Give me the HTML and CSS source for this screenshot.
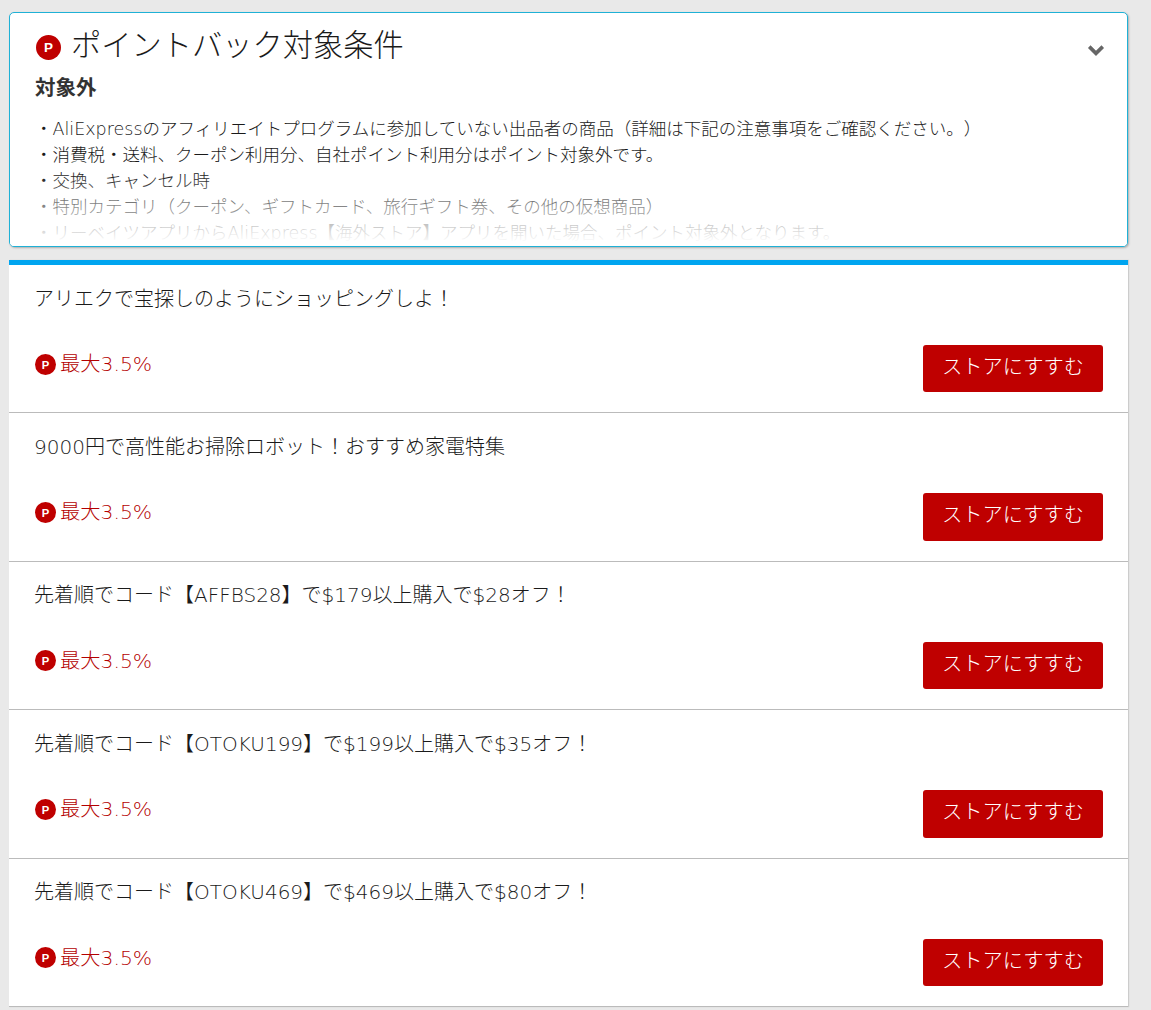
FILE: index.html
```html
<!DOCTYPE html>
<html lang="ja">
<head>
<meta charset="utf-8">
<title>ポイントバック対象条件</title>
<link rel="stylesheet" href="styles.css">
</head>
<body>
<section class="cond">
  <h2 class="cond-title"><svg class="p-icon p-large" viewBox="0 0 26 26"><circle cx="13" cy="13" r="13" fill="#bf0000"/><text x="13" y="18" text-anchor="middle" class="p-letter">P</text></svg>ポイントバック対象条件</h2>
  <svg class="chevron" viewBox="0 0 16 12"><path d="M2 3l6 6 6-6" fill="none" stroke="#666" stroke-width="3.2"/></svg>
  <h3 class="cond-sub">対象外</h3>
  <ul class="cond-list">
    <li>・AliExpressのアフィリエイトプログラムに参加していない出品者の商品（詳細は下記の注意事項をご確認ください。）</li>
    <li>・消費税・送料、クーポン利用分、自社ポイント利用分はポイント対象外です。</li>
    <li>・交換、キャンセル時</li>
    <li>・特別カテゴリ（クーポン、ギフトカード、旅行ギフト券、その他の仮想商品）</li>
    <li>・リーベイツアプリからAliExpress【海外ストア】アプリを開いた場合、ポイント対象外となります。</li>
  </ul>
  <div class="fade"></div>
</section>
<section class="offers">
  <article class="offer">
    <p class="offer-title">アリエクで宝探しのようにショッピングしよ！</p>
    <div class="offer-foot">
      <span class="rate"><svg class="p-icon" viewBox="0 0 26 26"><circle cx="13" cy="13" r="13" fill="#bf0000"/><text x="13" y="18" text-anchor="middle" class="p-letter">P</text></svg>最大3.5%</span>
      <a class="btn">ストアにすすむ</a>
    </div>
  </article>
  <article class="offer">
    <p class="offer-title">9000円で高性能お掃除ロボット！おすすめ家電特集</p>
    <div class="offer-foot">
      <span class="rate"><svg class="p-icon" viewBox="0 0 26 26"><circle cx="13" cy="13" r="13" fill="#bf0000"/><text x="13" y="18" text-anchor="middle" class="p-letter">P</text></svg>最大3.5%</span>
      <a class="btn">ストアにすすむ</a>
    </div>
  </article>
  <article class="offer">
    <p class="offer-title">先着順でコード【AFFBS28】で$179以上購入で$28オフ！</p>
    <div class="offer-foot">
      <span class="rate"><svg class="p-icon" viewBox="0 0 26 26"><circle cx="13" cy="13" r="13" fill="#bf0000"/><text x="13" y="18" text-anchor="middle" class="p-letter">P</text></svg>最大3.5%</span>
      <a class="btn">ストアにすすむ</a>
    </div>
  </article>
  <article class="offer">
    <p class="offer-title">先着順でコード【OTOKU199】で$199以上購入で$35オフ！</p>
    <div class="offer-foot">
      <span class="rate"><svg class="p-icon" viewBox="0 0 26 26"><circle cx="13" cy="13" r="13" fill="#bf0000"/><text x="13" y="18" text-anchor="middle" class="p-letter">P</text></svg>最大3.5%</span>
      <a class="btn">ストアにすすむ</a>
    </div>
  </article>
  <article class="offer">
    <p class="offer-title">先着順でコード【OTOKU469】で$469以上購入で$80オフ！</p>
    <div class="offer-foot">
      <span class="rate"><svg class="p-icon" viewBox="0 0 26 26"><circle cx="13" cy="13" r="13" fill="#bf0000"/><text x="13" y="18" text-anchor="middle" class="p-letter">P</text></svg>最大3.5%</span>
      <a class="btn">ストアにすすむ</a>
    </div>
  </article>
</section>
</body>
</html>
```
FILE: styles.css
```css
html, body { margin: 0; padding: 0; height: 1010px; overflow: hidden; }
body {
  background: #e9e9e9;
  padding: 12px 23px 0 9px;
  box-sizing: border-box;
  font-family: "DejaVu Sans", "Noto Sans CJK JP", sans-serif;
  text-spacing-trim: space-all;
  color: #1a1a1a;
}
.cond {
  position: relative;
  box-sizing: border-box;
  height: 235px;
  background: #fff;
  border: 1px solid #1fb1d6;
  border-radius: 5px;
  box-shadow: 1px 1px 2px rgba(0,0,0,.25);
  padding: 13px 25px 0 26px;
  overflow: hidden;
}
.cond-title {
  margin: 0;
  display: flex;
  align-items: center;
  font-size: 30.25px;
  font-weight: 300;
  line-height: 40px;
  height: 40px;
  color: #1a1a1a;
}
.p-icon { flex: none; width: 21px; height: 21px; margin-right: 4px; }
.p-large { width: 25px; height: 25px; margin-right: 10px; margin-top: 2px; }
.p-letter { font: bold 14px "Liberation Sans", sans-serif; fill: #fff; }
.chevron { position: absolute; top: 30px; right: 22px; width: 18px; height: 14px; }
.cond-sub { margin: 8px 0 0 -1px; font-size: 20.5px; font-weight: 700; line-height: 28px; color: #333; }
.cond-list { list-style: none; margin: 14px 0 0 -1px; padding: 0; font-size: 17.5px; font-weight: 300; line-height: 26px; }
.cond-list li { white-space: nowrap; }
.fade {
  position: absolute;
  left: 0; right: 0; bottom: 0;
  height: 72px;
  background: linear-gradient(rgba(255,255,255,0), #fff 95%);
}
.offers {
  margin-top: 13px;
  background: #fff;
  border-top: 5px solid #00a5f0;
  box-shadow: 1px 0 1px #ccc;
}
.offer {
  box-sizing: border-box;
  height: 148.4px;
  padding: 18.5px 25px 0;
  border-bottom: 1px solid #bbb;
}
.offer-title { margin: 0; font-size: 20px; font-weight: 300; line-height: 30px; color: #1a1a1a; }
.offer-foot { display: flex; justify-content: space-between; align-items: flex-start; margin-top: 31.5px; }
.rate { display: flex; align-items: center; margin-top: 4px; font-size: 20.3px; font-weight: 300; line-height: 30px; color: #b40000; }
.rate .p-icon { margin-left: 1px; }
.btn {
  box-sizing: border-box;
  width: 180px;
  height: 47.4px;
  background: #bf0000;
  color: #fff;
  border-radius: 3px;
  text-align: center;
  font-size: 20.3px;
  font-weight: 300;
  line-height: 45px;
}
```
